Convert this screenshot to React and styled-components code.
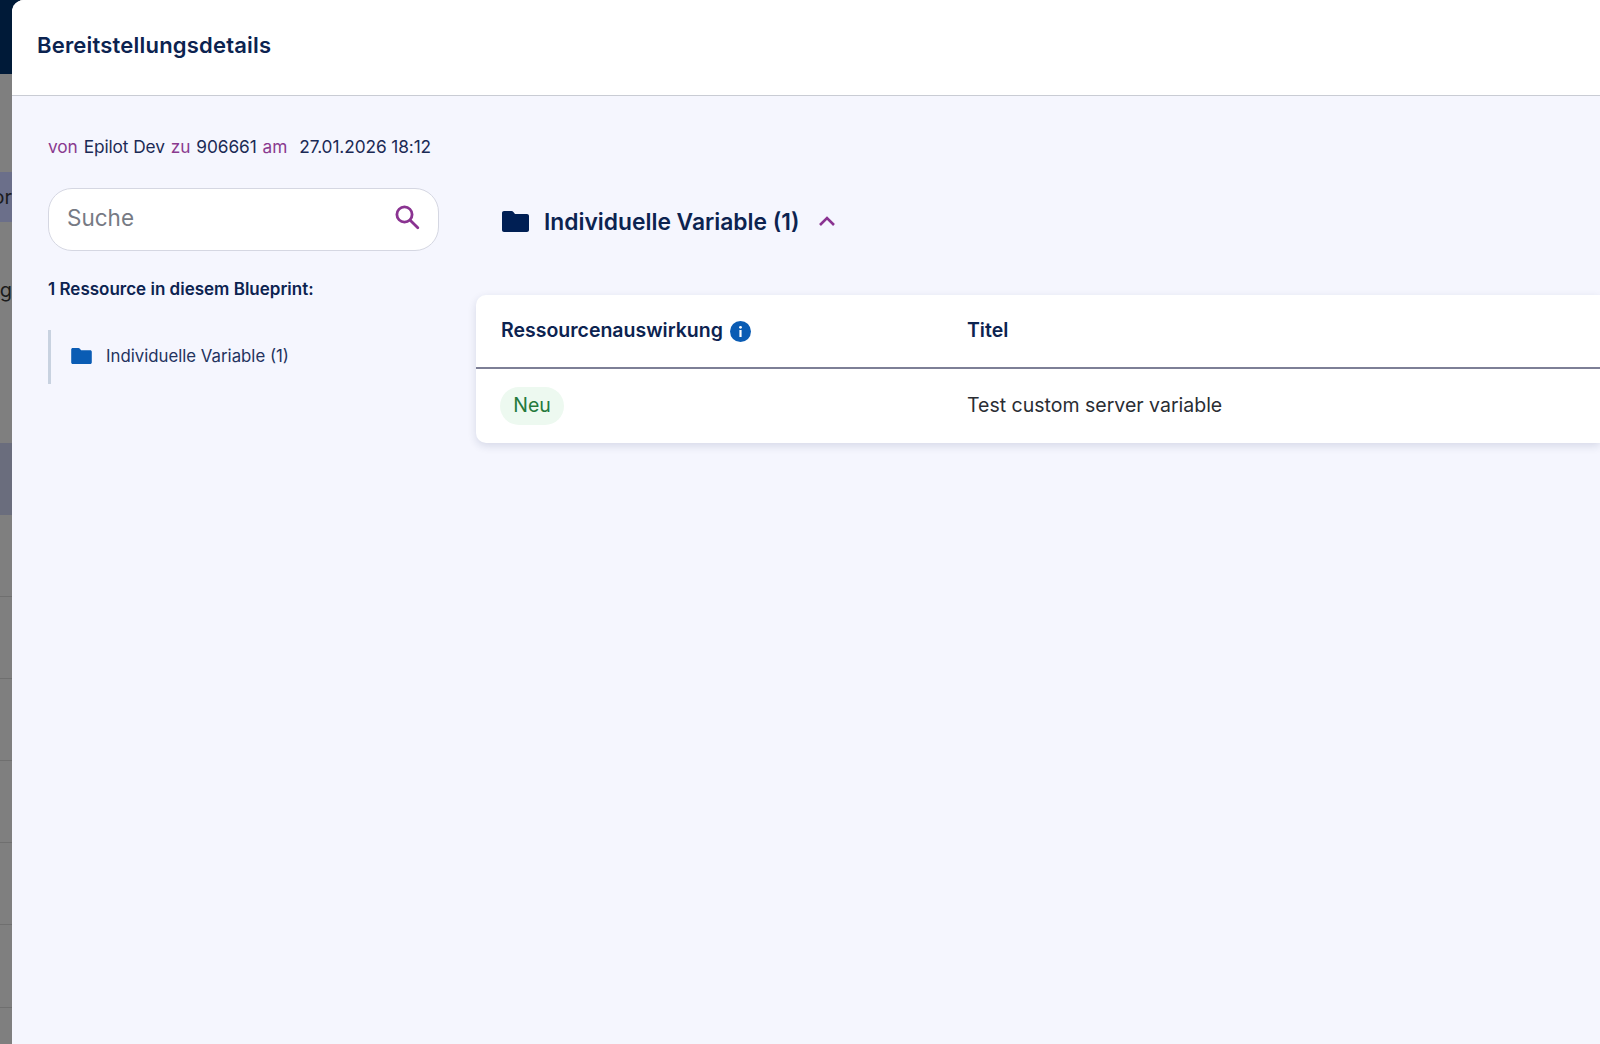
import React from 'react';
import styled, { createGlobalStyle } from 'styled-components';

const Global = createGlobalStyle`
  html, body { margin: 0; padding: 0; height: 100%; }
  body { font-family: Inter, "Open Sans", sans-serif; overflow: hidden; }
`;

const Page = styled.div`
  display: flex;
  width: 1600px;
  height: 1044px;
  overflow: hidden;
  background: #7f7f7f;
`;

const Backdrop = styled.div`
  flex: 0 0 20px;
  margin-right: -8px;
  display: flex;
  flex-direction: column;
  overflow: hidden;
`;

const TopBar = styled.div`
  flex: 0 0 74px;
  background: #001a38;
`;

const BackRow = styled.div`
  box-sizing: border-box;
  flex: 0 0 ${(p) => p.$h}px;
  margin-top: ${(p) => p.$mt || 0}px;
  background: ${(p) => p.$bg || 'transparent'};
  border-bottom: ${(p) => (p.$line ? '1px solid #6f6f6f' : 'none')};
  color: #1c1c1c;
  font-size: 20px;
  line-height: ${(p) => p.$h}px;
  white-space: nowrap;
  direction: rtl;
  width: 12px;
`;

const Modal = styled.div`
  position: relative;
  flex: 1;
  display: flex;
  flex-direction: column;
  background: #f5f6fe;
  border-top-left-radius: 12px;
  overflow: hidden;
`;

const Header = styled.header`
  flex: 0 0 96px;
  box-sizing: border-box;
  display: flex;
  align-items: center;
  padding: 0 0 5px 25px;
  background: #fff;
  border-bottom: 1px solid #c9ccd4;
`;

const Title = styled.h1`
  margin: 0;
  font-size: 22px;
  font-weight: 600;
  letter-spacing: 0.2px;
  color: #0c2350;
`;

const Body = styled.div`
  flex: 1;
  display: flex;
`;

const Sidebar = styled.aside`
  flex: 0 0 428px;
  box-sizing: border-box;
  padding: 40px 0 0 36px;
`;

const Meta = styled.div`
  display: flex;
  gap: 6px;
  font-size: 17.3px;
  letter-spacing: -0.1px;
  line-height: 22px;
  white-space: nowrap;
  color: #1b2a55;
`;

const MetaLabel = styled.span`
  color: #8a3a8f;
`;

const MetaDate = styled.span`
  margin-left: 6px;
`;

const SearchBox = styled.div`
  box-sizing: border-box;
  width: 391px;
  height: 63px;
  margin-top: 30px;
  display: flex;
  align-items: center;
  justify-content: space-between;
  padding: 0 18px 5px 18px;
  background: #fff;
  border: 1px solid #d5d7e2;
  border-radius: 24px;
`;

const SearchText = styled.span`
  font-size: 22.5px;
  color: #767a84;
`;

const ResourceCount = styled.div`
  margin-top: 27px;
  font-size: 17px;
  line-height: 22px;
  font-weight: 600;
  color: #0c2350;
`;

const NavList = styled.div`
  box-sizing: border-box;
  height: 54px;
  margin-top: 30px;
  display: flex;
  align-items: center;
  gap: 14px;
  padding: 0 0 2px 20px;
  border-left: 3px solid #c8d2e0;
  font-size: 16.8px;
  color: #24335e;
`;

const Content = styled.main`
  flex: 1;
  padding-top: 95px;
  padding-left: 36px;
`;

const GroupHead = styled.div`
  display: flex;
  align-items: center;
  margin-left: 26px;
  height: 60px;
  font-size: 22.8px;
  font-weight: 600;
  color: #0c2350;
`;

const GroupTitle = styled.span`
  margin-left: 15px;
  margin-right: 20px;
`;

const Card = styled.section`
  margin-top: 44px;
  background: #fff;
  border-radius: 10px 0 0 10px;
  box-shadow: 0 3px 8px rgba(30, 40, 90, 0.14);
`;

const TableRow = styled.div`
  display: grid;
  grid-template-columns: 466px 1fr;
  align-items: center;
  padding-left: 25px;
  box-sizing: border-box;
  height: ${(p) => p.$h}px;
  border-bottom: ${(p) => (p.$head ? '2px solid #7d7f96' : 'none')};
`;

const HeadCell = styled.div`
  display: flex;
  align-items: center;
  gap: 7px;
  padding-bottom: 2px;
  font-size: 19.5px;
  font-weight: 600;
  color: #0c2350;
`;

const HeadInfo = styled.span`
  display: flex;
  margin-top: 2px;
`;

const Cell = styled.div`
  padding-bottom: 2px;
  font-size: 19.5px;
  color: #2a2d33;
`;

const Badge = styled.span`
  box-sizing: border-box;
  display: inline-flex;
  align-items: center;
  justify-content: center;
  width: 64px;
  height: 38px;
  margin-left: -1px;
  padding-bottom: 2px;
  border-radius: 19px;
  background: #edf9f0;
  color: #257a3c;
  font-size: 19.5px;
`;

const FolderIcon = ({ w, h, color }) => (
  <svg width={w} height={h} viewBox="0 0 27 21" fill={color}>
    <path d="M2 0h7.5c.8 0 1.4.4 1.9 1l1.6 2h12c1.1 0 2 .9 2 2v14c0 1.1-.9 2-2 2H2c-1.1 0-2-.9-2-2V2C0 .9.9 0 2 0z" />
  </svg>
);

const SearchIcon = () => (
  <svg width="26" height="26" viewBox="0 0 26 26" fill="none" stroke="#8a3391" strokeWidth="2.8" strokeLinecap="round">
    <circle cx="10.5" cy="10.5" r="7.6" />
    <path d="M16.2 16.2l7.6 7.6" />
  </svg>
);

const ChevronIcon = () => (
  <svg width="16" height="10" viewBox="0 0 16 10" fill="none" stroke="#8a3391" strokeWidth="2.6">
    <path d="M1 9l7-7 7 7" />
  </svg>
);

const InfoIcon = () => (
  <svg width="21" height="21" viewBox="0 0 21 21">
    <circle cx="10.5" cy="10.5" r="10.5" fill="#0a5cb4" />
    <rect x="9.4" y="9" width="2.2" height="7" fill="#fff" />
    <circle cx="10.5" cy="6.3" r="1.4" fill="#fff" />
  </svg>
);

export default function App() {
  return (
    <Page>
      <Global />
      <Backdrop>
        <TopBar />
        <BackRow $h={50} $mt={98} $bg="#6b6f8a">or</BackRow>
        <BackRow $h={50} $mt={43}>g</BackRow>
        <BackRow $h={72} $mt={128} $bg="#6a6d7d" />
        <BackRow $h={82} $line />
        <BackRow $h={82} $line />
        <BackRow $h={82} $line />
        <BackRow $h={82} $line />
        <BackRow $h={82} $line />
        <BackRow $h={83} $line />
      </Backdrop>
      <Modal>
        <Header>
          <Title>Bereitstellungsdetails</Title>
        </Header>
        <Body>
          <Sidebar>
            <Meta>
              <MetaLabel>von</MetaLabel>
              <span>Epilot Dev</span>
              <MetaLabel>zu</MetaLabel>
              <span>906661</span>
              <MetaLabel>am</MetaLabel>
              <MetaDate>27.01.2026 18:12</MetaDate>
            </Meta>
            <SearchBox>
              <SearchText>Suche</SearchText>
              <SearchIcon />
            </SearchBox>
            <ResourceCount>1 Ressource in diesem Blueprint:</ResourceCount>
            <NavList>
              <FolderIcon w={21} h={16} color="#0a5cb4" />
              <span>Individuelle Variable (1)</span>
            </NavList>
          </Sidebar>
          <Content>
            <GroupHead>
              <FolderIcon w={27} h={21} color="#001f54" />
              <GroupTitle>Individuelle Variable (1)</GroupTitle>
              <ChevronIcon />
            </GroupHead>
            <Card>
              <TableRow $head $h={74}>
                <HeadCell>
                  Ressourcenauswirkung
                  <HeadInfo>
                    <InfoIcon />
                  </HeadInfo>
                </HeadCell>
                <HeadCell>Titel</HeadCell>
              </TableRow>
              <TableRow $h={74}>
                <div>
                  <Badge>Neu</Badge>
                </div>
                <Cell>Test custom server variable</Cell>
              </TableRow>
            </Card>
          </Content>
        </Body>
      </Modal>
    </Page>
  );
}
